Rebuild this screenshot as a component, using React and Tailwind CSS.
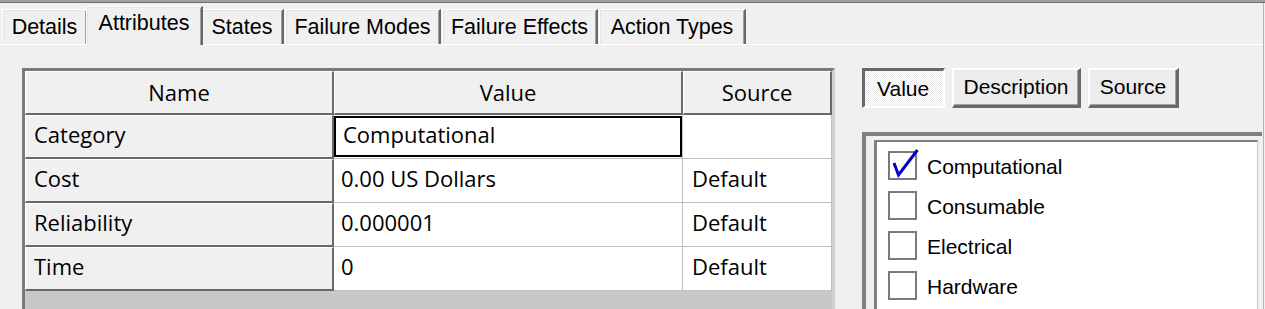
import React from "react";

const sys = { fontFamily: '"Liberation Sans", Arial, sans-serif' };
const seg = { fontFamily: '"Open Sans", "Noto Sans", sans-serif' };

function Tab({ label, className }) {
  return (
    <div
      className={`h-[35px] flex justify-center pt-[5px] border-t border-l border-white border-r-2 border-r-[#696969] shadow-[inset_1px_1px_0_#e3e3e3,inset_-1px_0_0_#a0a0a0] bg-[#f0f0f0] text-[21.5px] leading-[24px] text-black whitespace-nowrap ${className}`}
    >
      {label}
    </div>
  );
}

function HeadCell({ label, className }) {
  return (
    <div
      className={`h-full flex items-center justify-center bg-[#f0f0f0] border-t border-l border-white border-r-2 border-b-2 border-r-[#696969] border-b-[#696969] text-[22px] text-black ${className}`}
    >
      {label}
    </div>
  );
}

function Row({ name, value, source, editing }) {
  return (
    <div className="flex h-[44px] shrink-0">
      <div className="w-[309px] h-full flex items-center pl-[8px] pb-[4px] bg-[#f0f0f0] border-t border-l border-white border-r-2 border-b-2 border-r-[#696969] border-b-[#696969]">
        {name}
      </div>
      {editing ? (
        <div className="w-[349px] h-full bg-white border-r border-b border-[#c0c0c0]">
          <div className="mt-[1px] h-[41px] w-[348px] border-2 border-black flex items-center pl-[7px] pb-[4px]">
            {value}
          </div>
        </div>
      ) : (
        <div className="w-[349px] h-full flex items-center pl-[7px] pb-[4px] bg-white border-r border-b border-[#c0c0c0]">
          {value}
        </div>
      )}
      <div className="w-[149px] h-full flex items-center pl-[9px] pb-[4px] bg-white border-r border-b border-[#c0c0c0]">
        {source}
      </div>
    </div>
  );
}

function Check({ label, checked }) {
  return (
    <div className="flex items-center h-[40px] pl-[11px]">
      <div className="relative w-[29px] h-[29px] border-2 border-[#7a7a7a] bg-white shrink-0">
        {checked && (
          <svg
            className="absolute left-[-2px] top-[-6px] overflow-visible"
            width="33"
            height="33"
            viewBox="0 0 33 33"
          >
            <polyline
              points="6,16 10.5,28 29.5,3"
              fill="none"
              stroke="#0000c0"
              strokeWidth="3"
              strokeLinejoin="miter"
            />
          </svg>
        )}
      </div>
      <div className="ml-[10px] pt-[3px] text-[21px] leading-[24px] text-black" style={sys}>
        {label}
      </div>
    </div>
  );
}

export default function App() {
  return (
    <div className="w-[1265px] h-[309px] bg-[#f0f0f0] overflow-hidden flex flex-col" style={sys}>
      <div className="h-[3px] shrink-0 bg-[#a0a0a0] border-b border-[#6e6e6e]" />
      <div className="w-[1264px] flex-1 flex flex-col border-r border-[#b4b4b4]">
        {/* tab strip */}
        <div className="h-[42px] shrink-0 flex items-end border-b border-white">
          <Tab label="Details" className="w-[86px] ml-[2px]" />
          <div className="relative z-10 w-[117px] h-[39px] -mb-[1px] -ml-[2px] -mr-[2px] flex justify-center pt-[4px] border-t border-l border-white border-r-2 border-r-[#696969] shadow-[inset_1px_1px_0_#e3e3e3,inset_-1px_0_0_#a0a0a0] bg-[#f0f0f0] text-[21.5px] leading-[24px] text-black">
            Attributes
          </div>
          <Tab label="States" className="w-[83px]" />
          <Tab label="Failure Modes" className="w-[156px] ml-[1px]" />
          <Tab label="Failure Effects" className="w-[156px] ml-[1px]" />
          <Tab label="Action Types" className="w-[147px] ml-[1px]" />
        </div>

        {/* panel */}
        <div className="flex flex-1">
          {/* grid */}
          <div
            className="ml-[22px] mt-[23px] w-[813px] h-[260px] shrink-0 flex flex-col border-t-[3px] border-l-[3px] border-r-[3px] border-t-[#7a7a7a] border-l-[#7a7a7a] border-r-[#d0d0d0] bg-[#c8c8c8] text-[22px] text-black"
            style={seg}
          >
            <div className="flex h-[44px] shrink-0">
              <HeadCell label="Name" className="w-[309px]" />
              <HeadCell label="Value" className="w-[349px]" />
              <HeadCell label="Source" className="w-[149px]" />
            </div>
            <Row name="Category" value="Computational" source="" editing />
            <Row name="Cost" value="0.00 US Dollars" source="Default" />
            <Row name="Reliability" value="0.000001" source="Default" />
            <Row name="Time" value="0" source="Default" />
          </div>

          {/* right side */}
          <div className="ml-[27px] mt-[23px] w-[400px] flex flex-col">
            <div className="flex gap-[7px] h-[40px] shrink-0 text-[21px] leading-[24px] text-black">
              <div className="w-[83px] h-full pl-[12px] pt-[6px] border-t-[3px] border-l-[3px] border-t-[#696969] border-l-[#696969] border-b-2 border-r-2 border-b-white border-r-white bg-[repeating-conic-gradient(#ffffff_0_25%,#ececec_0_50%)] bg-[length:2px_2px]">
                Value
              </div>
              <div className="w-[129px] h-full flex justify-center pt-[5px] border-t-2 border-l-2 border-t-white border-l-white border-b-[3px] border-r-[3px] border-b-[#696969] border-r-[#696969] shadow-[inset_-1px_-1px_0_#a0a0a0] bg-[#ececec]">
                Description
              </div>
              <div className="w-[91px] h-full flex justify-center pt-[5px] border-t-2 border-l-2 border-t-white border-l-white border-b-[3px] border-r-[3px] border-b-[#696969] border-r-[#696969] shadow-[inset_-1px_-1px_0_#a0a0a0] bg-[#ececec]">
                Source
              </div>
            </div>

            <div className="mt-[24px] h-[200px] shrink-0 border-t-4 border-l-4 border-[#808080] pl-[8px] pt-[4px]">
              <div className="w-[384px] h-full bg-white border-l-[3px] border-t-2 border-l-[#808080] border-t-[#808080] border-r border-r-[#c8c8c8] pt-[3px]">
                <Check label="Computational" checked />
                <Check label="Consumable" />
                <Check label="Electrical" />
                <Check label="Hardware" />
              </div>
            </div>
          </div>
        </div>
      </div>
    </div>
  );
}
